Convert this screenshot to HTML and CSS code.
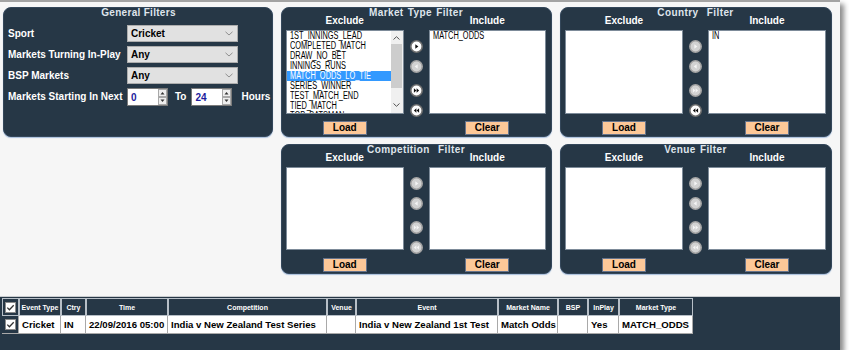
FILE: index.html
```html
<!doctype html>
<html lang="en">
	<head>
		<meta charset="UTF-8" />
		<title>Market Filters</title>
		<link rel="stylesheet" href="styles.css">
	</head>
	<body>
		<div class="window">
			<div class="filters">
				<!-- general -->
				<div class="panel general">
					<div class="panel-title">General Filters</div>
					<div class="form">
						<span class="lbl">Sport</span>
						<div class="select"><span>Cricket</span><svg class="chev" width="8" height="5" viewBox="0 0 8 5"><path d="M0.5 0.8L4 4L7.5 0.8" fill="none" stroke="#8f8f8f" stroke-width="1"/></svg></div>
						<span class="lbl">Markets Turning In-Play</span>
						<div class="select"><span>Any</span><svg class="chev" width="8" height="5" viewBox="0 0 8 5"><path d="M0.5 0.8L4 4L7.5 0.8" fill="none" stroke="#8f8f8f" stroke-width="1"/></svg></div>
						<span class="lbl">BSP Markets</span>
						<div class="select"><span>Any</span><svg class="chev" width="8" height="5" viewBox="0 0 8 5"><path d="M0.5 0.8L4 4L7.5 0.8" fill="none" stroke="#8f8f8f" stroke-width="1"/></svg></div>
						<span class="lbl">Markets Starting In Next</span>
						<div class="range">
							<div class="spin">
								<span>0</span>
								<svg class="spin-btns" width="9" height="16" viewBox="0 0 9 16"><rect x="0.5" y="0.5" width="8" height="7" fill="#eeeeee" stroke="#a8a8a8"/><rect x="0.5" y="8.5" width="8" height="7" fill="#eeeeee" stroke="#a8a8a8"/><path d="M2.5 5.5h4l-2-2.5z" fill="#333"/><path d="M2.5 10.5h4l-2 2.5z" fill="#333"/></svg>
							</div>
							<span class="lbl to">To</span>
							<div class="spin">
								<span>24</span>
								<svg class="spin-btns" width="9" height="16" viewBox="0 0 9 16"><rect x="0.5" y="0.5" width="8" height="7" fill="#eeeeee" stroke="#a8a8a8"/><rect x="0.5" y="8.5" width="8" height="7" fill="#eeeeee" stroke="#a8a8a8"/><path d="M2.5 5.5h4l-2-2.5z" fill="#333"/><path d="M2.5 10.5h4l-2 2.5z" fill="#333"/></svg>
							</div>
							<span class="lbl hours">Hours</span>
						</div>
					</div>
				</div>

				<!-- market type -->
				<div class="panel xfer">
					<div class="xfer-title">Market Type Filter</div>
					<div class="xfer-label">Exclude</div>
					<div class="xfer-label right">Include</div>
					<div class="list">
						<div class="items">
							<div class="item"><span>1ST_INNINGS_LEAD</span></div>
							<div class="item"><span>COMPLETED_MATCH</span></div>
							<div class="item"><span>DRAW_NO_BET</span></div>
							<div class="item"><span>INNINGS_RUNS</span></div>
							<div class="item selected"><span>MATCH_ODDS_LO_TIE</span></div>
							<div class="item"><span>SERIES_WINNER</span></div>
							<div class="item"><span>TEST_MATCH_END</span></div>
							<div class="item"><span>TIED_MATCH</span></div>
							<div class="item"><span>TOP_BATSMAN</span></div>
						</div>
						<div class="sb">
							<svg class="sb-arrow" width="7" height="4" viewBox="0 0 7 4"><path d="M0.5 3.5L3.5 0.7L6.5 3.5" fill="none" stroke="#555" stroke-width="1"/></svg>
							<div class="sb-thumb"></div>
							<svg class="sb-arrow down" width="7" height="4" viewBox="0 0 7 4"><path d="M0.5 0.5L3.5 3.3L6.5 0.5" fill="none" stroke="#555" stroke-width="1"/></svg>
						</div>
					</div>
					<div class="arrows">
						<svg class="arr" viewBox="0 0 13 13"><circle cx="6.5" cy="6.5" r="5.7" fill="#fff" stroke="#6f6f6f" stroke-width="1.6"/><path d="M5.3 4.2v4.6l3.1-2.3z" fill="#111"/></svg>
						<svg class="arr" viewBox="0 0 13 13"><circle cx="6.5" cy="6.5" r="5.7" fill="#d2d2d2" stroke="#a3a3a3" stroke-width="1.6"/><path d="M7.7 4.2v4.6l-3.1-2.3z" fill="#f4f4f4"/></svg>
						<svg class="arr gap" viewBox="0 0 13 13"><circle cx="6.5" cy="6.5" r="5.7" fill="#fff" stroke="#6f6f6f" stroke-width="1.6"/><path d="M3.9 4.2v4.6l2.5-2.3zM6.6 4.2v4.6l2.5-2.3z" fill="#111"/></svg>
						<svg class="arr" viewBox="0 0 13 13"><circle cx="6.5" cy="6.5" r="5.7" fill="#fff" stroke="#6f6f6f" stroke-width="1.6"/><path d="M9.1 4.2v4.6l-2.5-2.3zM6.4 4.2v4.6l-2.5-2.3z" fill="#111"/></svg>
					</div>
					<div class="list">
						<div class="items">
							<div class="item"><span>MATCH_ODDS</span></div>
						</div>
					</div>
					<button class="btn">Load</button>
					<button class="btn right">Clear</button>
				</div>

				<!-- country -->
				<div class="panel xfer">
					<div class="xfer-title">Country&nbsp; Filter</div>
					<div class="xfer-label">Exclude</div>
					<div class="xfer-label right">Include</div>
					<div class="list"></div>
					<div class="arrows">
						<svg class="arr" viewBox="0 0 13 13"><circle cx="6.5" cy="6.5" r="5.7" fill="#d2d2d2" stroke="#a3a3a3" stroke-width="1.6"/><path d="M5.3 4.2v4.6l3.1-2.3z" fill="#f4f4f4"/></svg>
						<svg class="arr" viewBox="0 0 13 13"><circle cx="6.5" cy="6.5" r="5.7" fill="#d2d2d2" stroke="#a3a3a3" stroke-width="1.6"/><path d="M7.7 4.2v4.6l-3.1-2.3z" fill="#f4f4f4"/></svg>
						<svg class="arr gap" viewBox="0 0 13 13"><circle cx="6.5" cy="6.5" r="5.7" fill="#d2d2d2" stroke="#a3a3a3" stroke-width="1.6"/><path d="M3.9 4.2v4.6l2.5-2.3zM6.6 4.2v4.6l2.5-2.3z" fill="#f4f4f4"/></svg>
						<svg class="arr" viewBox="0 0 13 13"><circle cx="6.5" cy="6.5" r="5.7" fill="#fff" stroke="#6f6f6f" stroke-width="1.6"/><path d="M9.1 4.2v4.6l-2.5-2.3zM6.4 4.2v4.6l-2.5-2.3z" fill="#111"/></svg>
					</div>
					<div class="list">
						<div class="items">
							<div class="item"><span>IN</span></div>
						</div>
					</div>
					<button class="btn">Load</button>
					<button class="btn right">Clear</button>
				</div>

				<!-- competition -->
				<div class="panel xfer low comp">
					<div class="xfer-title">Competition&nbsp; Filter</div>
					<div class="xfer-label">Exclude</div>
					<div class="xfer-label right">Include</div>
					<div class="list"></div>
					<div class="arrows">
						<svg class="arr" viewBox="0 0 13 13"><circle cx="6.5" cy="6.5" r="5.7" fill="#d2d2d2" stroke="#a3a3a3" stroke-width="1.6"/><path d="M5.3 4.2v4.6l3.1-2.3z" fill="#f4f4f4"/></svg>
						<svg class="arr" viewBox="0 0 13 13"><circle cx="6.5" cy="6.5" r="5.7" fill="#d2d2d2" stroke="#a3a3a3" stroke-width="1.6"/><path d="M7.7 4.2v4.6l-3.1-2.3z" fill="#f4f4f4"/></svg>
						<svg class="arr gap" viewBox="0 0 13 13"><circle cx="6.5" cy="6.5" r="5.7" fill="#d2d2d2" stroke="#a3a3a3" stroke-width="1.6"/><path d="M3.9 4.2v4.6l2.5-2.3zM6.6 4.2v4.6l2.5-2.3z" fill="#f4f4f4"/></svg>
						<svg class="arr" viewBox="0 0 13 13"><circle cx="6.5" cy="6.5" r="5.7" fill="#d2d2d2" stroke="#a3a3a3" stroke-width="1.6"/><path d="M9.1 4.2v4.6l-2.5-2.3zM6.4 4.2v4.6l-2.5-2.3z" fill="#f4f4f4"/></svg>
					</div>
					<div class="list"></div>
					<button class="btn">Load</button>
					<button class="btn right">Clear</button>
				</div>

				<!-- venue -->
				<div class="panel xfer low venue">
					<div class="xfer-title">Venue Filter</div>
					<div class="xfer-label">Exclude</div>
					<div class="xfer-label right">Include</div>
					<div class="list"></div>
					<div class="arrows">
						<svg class="arr" viewBox="0 0 13 13"><circle cx="6.5" cy="6.5" r="5.7" fill="#d2d2d2" stroke="#a3a3a3" stroke-width="1.6"/><path d="M5.3 4.2v4.6l3.1-2.3z" fill="#f4f4f4"/></svg>
						<svg class="arr" viewBox="0 0 13 13"><circle cx="6.5" cy="6.5" r="5.7" fill="#d2d2d2" stroke="#a3a3a3" stroke-width="1.6"/><path d="M7.7 4.2v4.6l-3.1-2.3z" fill="#f4f4f4"/></svg>
						<svg class="arr gap" viewBox="0 0 13 13"><circle cx="6.5" cy="6.5" r="5.7" fill="#d2d2d2" stroke="#a3a3a3" stroke-width="1.6"/><path d="M3.9 4.2v4.6l2.5-2.3zM6.6 4.2v4.6l2.5-2.3z" fill="#f4f4f4"/></svg>
						<svg class="arr" viewBox="0 0 13 13"><circle cx="6.5" cy="6.5" r="5.7" fill="#d2d2d2" stroke="#a3a3a3" stroke-width="1.6"/><path d="M9.1 4.2v4.6l-2.5-2.3zM6.4 4.2v4.6l-2.5-2.3z" fill="#f4f4f4"/></svg>
					</div>
					<div class="list"></div>
					<button class="btn">Load</button>
					<button class="btn right">Clear</button>
				</div>
			</div>

			<!-- market grid -->
			<div class="results">
				<table class="grid">
					<colgroup>
						<col class="c-chk"><col class="c-type"><col class="c-ctry"><col class="c-time"><col class="c-comp"><col class="c-venue"><col class="c-event"><col class="c-mname"><col class="c-bsp"><col class="c-inplay"><col class="c-mtype">
					</colgroup>
					<thead>
						<tr>
							<th class="chk-cell"><svg class="chk" width="11" height="11" viewBox="0 0 11 11"><rect x="0.5" y="0.5" width="10" height="10" fill="#fff" stroke="#8c8c8c"/><path d="M2.3 5.6L4.4 7.7L8.7 3.2" fill="none" stroke="#333" stroke-width="1.3"/></svg></th>
							<th>Event Type</th>
							<th>Ctry</th>
							<th>Time</th>
							<th>Competition</th>
							<th>Venue</th>
							<th>Event</th>
							<th>Market Name</th>
							<th>BSP</th>
							<th>InPlay</th>
							<th>Market Type</th>
						</tr>
					</thead>
					<tbody>
						<tr>
							<td class="chk-cell"><svg class="chk" width="11" height="11" viewBox="0 0 11 11"><rect x="0.5" y="0.5" width="10" height="10" fill="#fff" stroke="#8c8c8c"/><path d="M2.3 5.6L4.4 7.7L8.7 3.2" fill="none" stroke="#333" stroke-width="1.3"/></svg></td>
							<td>Cricket</td>
							<td>IN</td>
							<td>22/09/2016 05:00</td>
							<td>India v New Zealand Test Series</td>
							<td></td>
							<td>India v New Zealand 1st Test</td>
							<td>Match Odds</td>
							<td></td>
							<td>Yes</td>
							<td>MATCH_ODDS</td>
						</tr>
					</tbody>
				</table>
			</div>
		</div>
	</body>
</html>
```

FILE: styles.css
```css
* {
	margin: 0;
	padding: 0;
	box-sizing: border-box;
}
body {
	background: #fff;
	font-family: "Liberation Sans", Arial, sans-serif;
	font-size: 10px;
}
.window {
	width: 840px;
	height: 350px;
	background: #f6f6f6;
	border-top: 2px solid #a3a3a3;
	box-shadow: 4px 4px 5px rgba(0, 0, 0, 0.45);
	display: flex;
	flex-direction: column;
}
.filters {
	display: grid;
	grid-template-columns: 270px 271px 272px;
	grid-template-rows: 130px 130px;
	gap: 7px 8px;
	padding: 5px 0 0 3px;
}
.panel {
	background: #263746;
	border: 1px solid #34475a;
	border-radius: 8px;
	box-shadow: 0 1px 1px #a9bfdc;
	color: #fff;
	font-weight: bold;
}
.comp {
	grid-row: 2;
	grid-column: 2;
}
.venue {
	grid-row: 2;
	grid-column: 3;
}

/* general filters */
.general {
	padding: 0 3px 0 4px;
}
.panel-title {
	text-align: center;
	line-height: 10px;
	height: 17px;
	color: #dfe5ec;
	letter-spacing: 0.3px;
}
.form {
	display: grid;
	grid-template-columns: 119px auto;
	grid-template-rows: 17px 17px 17px 18px;
	row-gap: 4px;
	align-items: center;
}
.lbl {
	line-height: 12px;
	white-space: nowrap;
}
.select {
	width: 111px;
	height: 17px;
	background: #e1e1e1;
	border: 1px solid #adadad;
	color: #000;
	display: flex;
	align-items: center;
	justify-content: space-between;
	padding: 0 4px 0 3px;
}
.range {
	display: flex;
	align-items: center;
	height: 18px;
}
.spin {
	width: 41px;
	height: 18px;
	background: #fff;
	border: 1px solid #7a7a7a;
	display: flex;
	align-items: center;
}
.spin span {
	flex: 1;
	padding-left: 3px;
	color: #1c1c9c;
}
.to {
	margin: 0 5px 0 7px;
}
.hours {
	margin-left: 9px;
}

/* transfer filters */
.xfer {
	display: grid;
	grid-template-columns: 1fr 25px 1fr;
	grid-template-rows: 22px 84px 1fr;
	padding: 0 5px 1px 4px;
}
.xfer.low {
	grid-template-rows: 22px 83px 1fr;
}
.xfer-title {
	grid-row: 1;
	grid-column: 1 / -1;
	justify-self: center;
	align-self: start;
	line-height: 10px;
	color: #dfe5ec;
	letter-spacing: 0.4px;
	word-spacing: 1px;
}
.xfer-label {
	grid-row: 1;
	grid-column: 1;
	justify-self: center;
	align-self: end;
	line-height: 12px;
	margin-bottom: 3px;
}
.xfer-label.right {
	grid-column: 3;
}
.list {
	grid-row: 2;
	background: #fff;
	border: 1px solid #7d8b99;
	display: flex;
	overflow: hidden;
}
.items {
	flex: 1;
	min-width: 0;
}
.item {
	height: 10px;
	line-height: 10px;
	padding-left: 3px;
	font-weight: normal;
	font-size: 10px;
	color: #000;
	white-space: nowrap;
}
.item span {
	display: inline-block;
	transform: scaleX(0.74); /* narrow list font */
	transform-origin: left center;
}
.item.selected {
	background: #3399ff;
	color: #fff;
}
.sb {
	width: 12px;
	background: #f0f0f0;
	display: flex;
	flex-direction: column;
	align-items: center;
}
.sb-arrow {
	margin-top: 5px;
	flex: none;
}
.sb-arrow.down {
	margin-top: auto;
	margin-bottom: 6px;
}
.sb-thumb {
	width: 11px;
	height: 44px;
	margin-top: 4px;
	background: #cdcdcd;
}
.arrows {
	grid-row: 2;
	grid-column: 2;
	display: flex;
	flex-direction: column;
	align-items: center;
	gap: 7px;
	padding-top: 10px;
}
.arr {
	width: 13px;
	height: 13px;
	flex: none;
}
.arr.gap {
	margin-top: 4px;
}
.btn {
	grid-row: 3;
	grid-column: 1;
	justify-self: center;
	align-self: end;
	width: 44px;
	height: 14px;
	background: #fdc898;
	border: 1px solid #66748c;
	font-family: "Liberation Sans", Arial, sans-serif;
	font-weight: bold;
	font-size: 10px;
	line-height: 12px;
	color: #000;
}
.btn.right {
	grid-column: 3;
}

/* results grid */
.results {
	margin-top: auto;
	height: 54px;
	background: #263746;
	border-top: 1px solid #c9cccf;
	padding: 1px 0 0 2px;
}
.grid {
	border-collapse: separate;
	border-spacing: 0;
	table-layout: fixed;
	width: 691px;
}
.c-chk { width: 17px; }
.c-type { width: 42px; }
.c-ctry { width: 25px; }
.c-time { width: 82px; }
.c-comp { width: 159px; }
.c-venue { width: 29px; }
.c-event { width: 142px; }
.c-mname { width: 60px; }
.c-bsp { width: 30px; }
.c-inplay { width: 31px; }
.c-mtype { width: 74px; }
.grid th {
	height: 18px;
	background: #263746;
	border: 1px solid #b7bfc7;
	color: #fff;
	font-size: 7px;
	font-weight: bold;
	text-align: center;
	white-space: nowrap;
	overflow: hidden;
}
.grid td {
	height: 18px;
	background: #fff;
	border-right: 1px solid #a9a9a9;
	border-bottom: 1px solid #a9a9a9;
	padding: 0 1px 0 3px;
	font-size: 9.6px;
	font-weight: bold;
	color: #000;
	white-space: nowrap;
	overflow: hidden;
}
.grid .chk-cell {
	background: #263746;
	padding: 0;
	text-align: center;
}
.chk {
	display: block;
	margin: 0 auto;
}
```
